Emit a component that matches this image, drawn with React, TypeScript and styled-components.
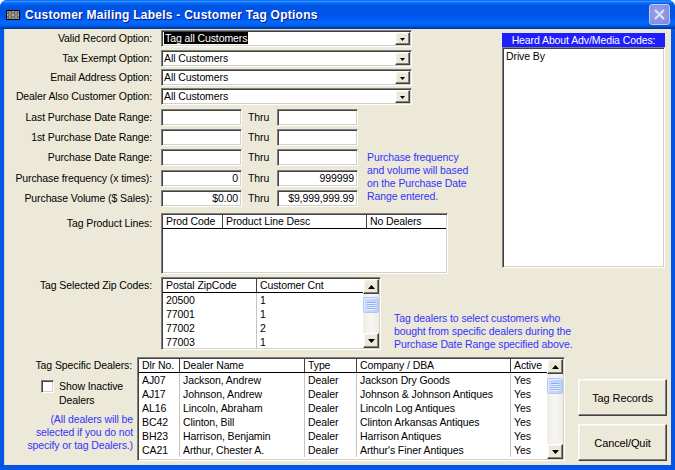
import React from "react";
import styled, { createGlobalStyle } from "styled-components";

const GlobalStyle = createGlobalStyle`
  html, body { margin: 0; padding: 0; background: #fff; }
  body {
    font-family: "Liberation Sans", Arial, sans-serif;
    font-size: 10.5px;
    letter-spacing: -0.1px;
    color: #000;
  }
  * { box-sizing: border-box; }
`;

const sunken = `
  border: 1px solid;
  border-color: #808080 #fff #fff #808080;
  box-shadow: inset 1px 1px 0 #404040, inset -1px -1px 0 #d4d0c8;
`;

const raised = `
  border: 1px solid;
  border-color: #fff #404040 #404040 #fff;
  box-shadow: inset -1px -1px 0 #808080, inset 1px 1px 0 #f6f4ec;
  background: #ece9d8;
`;

const Window = styled.div`
  width: 675px;
  height: 470px;
  display: flex;
  flex-direction: column;
  background: #0555e6;
  border-radius: 7px 7px 0 0;
  overflow: hidden;
`;

const TitleBar = styled.div`
  height: 29px;
  flex: none;
  display: flex;
  align-items: center;
  padding: 0 5px 0 6px;
  background: linear-gradient(
    to bottom,
    #0058ee 0%,
    #3593ff 4%,
    #288eff 6%,
    #127dff 8%,
    #036ffc 10%,
    #0262ee 14%,
    #0057e5 20%,
    #0054e3 24%,
    #0055eb 56%,
    #005bf5 66%,
    #026afe 76%,
    #0062ef 86%,
    #0052d6 92%,
    #0040ab 96%,
    #003092 100%
  );
`;

const TitleText = styled.div`
  flex: 1;
  margin-left: 5px;
  color: #fff;
  font-family: "Liberation Sans", Arial, sans-serif;
  font-weight: bold;
  font-size: 12px;
  letter-spacing: 0.25px;
  text-shadow: 1px 1px 0 #0a1a8a;
`;

const CloseButton = styled.div`
  width: 21px;
  height: 21px;
  border-radius: 3px;
  border: 1px solid #c3c9f2;
  background: radial-gradient(circle at 40% 40%, #97a0e8 0%, #8690e0 70%, #7a85da 100%);
  display: flex;
  align-items: center;
  justify-content: center;
`;

const Client = styled.div`
  flex: 1;
  margin: 0 4px 5px 4px;
  background: #ece9d8;
  display: flex;
  flex-direction: column;
  box-shadow: inset 1px 0 0 #d8d4c4;
`;

const TopSection = styled.div`
  display: flex;
  padding-top: 1px;
`;

const FormGrid = styled.div`
  width: 498px;
  display: grid;
  grid-template-columns: 157px 81px 35px 81px 1fr;
  grid-template-rows: 20px 19px 19px 21px 20px 20px 21px 20px 23px 61px;
`;

const Label = styled.div<{ $pad?: number }>`
  grid-column: 1;
  text-align: right;
  padding-right: 9px;
  padding-top: ${(p) => p.$pad ?? 0}px;
  line-height: ${(p) => (p.$pad ? 14 : 17)}px;
  white-space: nowrap;
`;

const Combo = styled.div`
  grid-column: 2 / span 4;
  justify-self: start;
  width: 251px;
  height: 17px;
  ${sunken}
  background: #fff;
  padding: 1px;
  display: flex;
`;

const ComboText = styled.div`
  flex: 1;
  line-height: 13px;
  padding-left: 1px;
  white-space: nowrap;
  overflow: hidden;
`;

const Selected = styled.span`
  background: #000;
  color: #fff;
  padding: 0 1px;
`;

const DropButton = styled.div`
  width: 15px;
  height: 13px;
  ${raised}
  display: flex;
  align-items: center;
  justify-content: center;
  padding-top: 2px;
`;

const TextBox = styled.div<{ $right?: boolean }>`
  width: 81px;
  height: 17px;
  ${sunken}
  background: #fff;
  line-height: 15px;
  padding: 0 3px;
  text-align: ${(p) => (p.$right ? "right" : "left")};
  white-space: nowrap;
  overflow: hidden;
`;

const Thru = styled.div`
  padding-left: 6px;
  line-height: 17px;
`;

const BlueNote = styled.div<{ $align?: string }>`
  color: #3333ff;
  line-height: 13px;
  white-space: nowrap;
  text-align: ${(p) => p.$align ?? "left"};
`;

const PurchaseNote = styled(BlueNote)`
  grid-column: 5;
  grid-row: 7 / span 3;
  padding: 2px 0 0 9px;
`;

const ListSlot = styled.div`
  grid-column: 2 / span 4;
`;

const ListBox = styled.div<{ $w: number; $h: number }>`
  width: ${(p) => p.$w}px;
  height: ${(p) => p.$h}px;
  ${sunken}
  background: #fff;
  padding: 1px;
  display: flex;
  overflow: hidden;
`;

const Table = styled.div`
  flex: 1;
  display: flex;
  flex-direction: column;
  min-width: 0;
`;

const Row = styled.div<{ $cols: string }>`
  display: grid;
  grid-template-columns: ${(p) => p.$cols};
`;

const HeadCell = styled.div`
  height: 14px;
  line-height: 13px;
  padding-left: 3px;
  border-bottom: 1px solid #000;
  border-right: 1px solid #404040;
  white-space: nowrap;
  overflow: hidden;
  &:last-child {
    border-right: none;
  }
`;

const Cell = styled.div`
  height: 14px;
  line-height: 14px;
  padding-left: 3px;
  border-right: 1px solid #c4c4c4;
  white-space: nowrap;
  overflow: hidden;
  &:last-child {
    border-right: none;
  }
`;

const ScrollTrack = styled.div`
  width: 16px;
  display: flex;
  flex-direction: column;
  background: linear-gradient(to right, #eeede6, #f7f6f2 50%, #efeee8);
`;

const ScrollArrow = styled.div`
  height: 15px;
  ${raised}
  display: flex;
  align-items: center;
  justify-content: center;
`;

const Thumb = styled.div<{ $top: number }>`
  margin-top: ${(p) => p.$top}px;
  height: 16px;
  border: 1px solid #b2c5f4;
  border-radius: 2px;
  background: linear-gradient(to right, #c9d8fc, #bccffb);
  box-shadow: inset 1px 1px 0 #e4ecfe;
  display: flex;
  flex-direction: column;
  align-items: center;
  justify-content: center;
  gap: 1px;
`;

const Grip = styled.div`
  width: 8px;
  height: 1px;
  background: #8eaef3;
  box-shadow: 0 1px 0 #eef3fe;
`;

const Spacer = styled.div`
  flex: 1;
`;

const MediaPanel = styled.div`
  width: 163px;
  height: 235px;
  margin-top: 3px;
  display: flex;
  flex-direction: column;
`;

const MediaHeader = styled.div`
  height: 14px;
  background: #1e1eff;
  color: #fff;
  text-align: center;
  line-height: 14px;
  white-space: nowrap;
`;

const MediaList = styled.div`
  flex: 1;
  ${sunken}
  background: #fff;
  padding: 1px 3px;
  line-height: 14px;
`;

const ZipSection = styled.div`
  display: flex;
  align-items: flex-start;
  margin-top: 3px;
`;

const SideLabel = styled.div<{ $w: number; $pr: number; $pt: number }>`
  width: ${(p) => p.$w}px;
  padding-right: ${(p) => p.$pr}px;
  padding-top: ${(p) => p.$pt}px;
  text-align: right;
  line-height: 14px;
  white-space: nowrap;
`;

const ZipNote = styled(BlueNote)`
  margin: 35px 0 0 13px;
`;

const DealerSection = styled.div`
  display: flex;
  align-items: flex-start;
  margin-top: 6px;
`;

const DealerSide = styled.div`
  width: 133px;
  display: flex;
  flex-direction: column;
`;

const CheckRow = styled.div`
  display: flex;
  align-items: flex-start;
  margin-top: 7px;
  padding-left: 37px;
`;

const CheckBox = styled.div`
  width: 13px;
  height: 13px;
  margin-top: 1px;
  ${sunken}
  background: #fff;
`;

const CheckLabel = styled.div`
  margin-left: 5px;
  line-height: 14px;
`;

const DealerNote = styled(BlueNote)`
  margin-top: 6px;
  padding-right: 4px;
`;

const ButtonColumn = styled.div`
  display: flex;
  flex-direction: column;
  gap: 8px;
  margin: 22px 0 0 13px;
`;

const CmdButton = styled.button`
  width: 89px;
  height: 37px;
  ${raised}
  font-family: inherit;
  font-size: 11px;
  letter-spacing: -0.1px;
  color: #000;
  padding: 0;
`;

const Arrow = ({ up }: { up?: boolean }) => (
  <svg width="7" height="4" viewBox="0 0 7 4">
    <polygon points={up ? "3.5,0 7,4 0,4" : "0,0 7,0 3.5,4"} fill="#000" />
  </svg>
);

const ScrollBar = ({ thumbTop }: { thumbTop: number }) => (
  <ScrollTrack>
    <ScrollArrow>
      <Arrow up />
    </ScrollArrow>
    <Thumb $top={thumbTop}>
      <Grip />
      <Grip />
      <Grip />
      <Grip />
    </Thumb>
    <Spacer />
    <ScrollArrow>
      <Arrow />
    </ScrollArrow>
  </ScrollTrack>
);

const ComboBox = ({ children }: { children: React.ReactNode }) => (
  <Combo>
    <ComboText>{children}</ComboText>
    <DropButton>
      <svg width="5" height="3" viewBox="0 0 5 3">
        <polygon points="0,0 5,0 2.5,3" fill="#000" />
      </svg>
    </DropButton>
  </Combo>
);

const FormIcon = () => (
  <svg width="14" height="10" viewBox="0 0 14 10">
    <rect x="0.5" y="0.5" width="13" height="9" fill="#d4d0c8" stroke="#000" />
    <rect x="2" y="2" width="4" height="2" fill="#fff" stroke="#000" strokeWidth="0.8" />
    <rect x="8" y="2" width="4" height="2" fill="#fff" stroke="#000" strokeWidth="0.8" />
    <rect x="2" y="6" width="4" height="2" fill="#fff" stroke="#000" strokeWidth="0.8" />
    <rect x="8" y="6" width="4" height="2" fill="#fff" stroke="#000" strokeWidth="0.8" />
  </svg>
);

const dateRows = [
  { label: "Last Purchase Date Range:", from: "", to: "" },
  { label: "1st Purchase Date Range:", from: "", to: "" },
  { label: "Purchase Date Range:", from: "", to: "" },
  { label: "Purchase frequency (x times):", from: "0", to: "999999" },
  { label: "Purchase Volume ($ Sales):", from: "$0.00", to: "$9,999,999.99" },
];

const zips = [
  ["20500", "1"],
  ["77001", "1"],
  ["77002", "2"],
  ["77003", "1"],
];

const dealers = [
  ["AJ07", "Jackson, Andrew", "Dealer", "Jackson Dry Goods", "Yes"],
  ["AJ17", "Johnson, Andrew", "Dealer", "Johnson & Johnson Antiques", "Yes"],
  ["AL16", "Lincoln, Abraham", "Dealer", "Lincoln Log Antiques", "Yes"],
  ["BC42", "Clinton, Bill", "Dealer", "Clinton Arkansas Antiques", "Yes"],
  ["BH23", "Harrison, Benjamin", "Dealer", "Harrison Antiques", "Yes"],
  ["CA21", "Arthur, Chester A.", "Dealer", "Arthur's Finer Antiques", "Yes"],
];

const productCols = "60px 144px 1fr";
const zipCols = "94px 1fr";
const dealerCols = "41px 125px 52px 154px 1fr";

export default function App() {
  return (
    <>
      <GlobalStyle />
      <Window>
        <TitleBar>
          <FormIcon />
          <TitleText>Customer Mailing Labels - Customer Tag Options</TitleText>
          <CloseButton>
            <svg width="11" height="11" viewBox="0 0 11 11">
              <path d="M1 1 L10 10 M10 1 L1 10" stroke="#dfe4fb" strokeWidth="2" />
            </svg>
          </CloseButton>
        </TitleBar>
        <Client>
          <TopSection>
            <FormGrid>
              <Label>Valid Record Option:</Label>
              <ComboBox>
                <Selected>Tag all Customers</Selected>
              </ComboBox>
              <Label>Tax Exempt Option:</Label>
              <ComboBox>All Customers</ComboBox>
              <Label>Email Address Option:</Label>
              <ComboBox>All Customers</ComboBox>
              <Label>Dealer Also Customer Option:</Label>
              <ComboBox>All Customers</ComboBox>

              {dateRows.map((r, i) => (
                <React.Fragment key={r.label}>
                  <Label>{r.label}</Label>
                  <TextBox $right>{r.from}</TextBox>
                  <Thru>Thru</Thru>
                  <TextBox $right>{r.to}</TextBox>
                  {i === 2 && (
                    <PurchaseNote>
                      Purchase frequency
                      <br />
                      and volume will based
                      <br />
                      on the Purchase Date
                      <br />
                      Range entered.
                    </PurchaseNote>
                  )}
                </React.Fragment>
              ))}

              <Label $pad={3}>Tag Product Lines:</Label>
              <ListSlot>
                <ListBox $w={287} $h={61}>
                  <Table>
                    <Row $cols={productCols}>
                      <HeadCell>Prod Code</HeadCell>
                      <HeadCell>Product Line Desc</HeadCell>
                      <HeadCell>No Dealers</HeadCell>
                    </Row>
                  </Table>
                </ListBox>
              </ListSlot>
            </FormGrid>

            <MediaPanel>
              <MediaHeader>Heard About Adv/Media Codes:</MediaHeader>
              <MediaList>Drive By</MediaList>
            </MediaPanel>
          </TopSection>

          <ZipSection>
            <SideLabel $w={157} $pr={9} $pt={1}>
              Tag Selected Zip Codes:
            </SideLabel>
            <ListBox $w={220} $h={73}>
              <Table>
                <Row $cols={zipCols}>
                  <HeadCell>Postal ZipCode</HeadCell>
                  <HeadCell>Customer Cnt</HeadCell>
                </Row>
                {zips.map((z) => (
                  <Row $cols={zipCols} key={z[0]}>
                    <Cell>{z[0]}</Cell>
                    <Cell>{z[1]}</Cell>
                  </Row>
                ))}
              </Table>
              <ScrollBar thumbTop={3} />
            </ListBox>
            <ZipNote>
              Tag dealers to select customers who
              <br />
              bought from specific dealers during the
              <br />
              Purchase Date Range specified above.
            </ZipNote>
          </ZipSection>

          <DealerSection>
            <DealerSide>
              <SideLabel $w={133} $pr={5} $pt={1}>
                Tag Specific Dealers:
              </SideLabel>
              <CheckRow>
                <CheckBox />
                <CheckLabel>
                  Show Inactive
                  <br />
                  Dealers
                </CheckLabel>
              </CheckRow>
              <DealerNote $align="right">
                (All dealers will be
                <br />
                selected if you do not
                <br />
                specify or tag Dealers.)
              </DealerNote>
            </DealerSide>
            <ListBox $w={428} $h={104}>
              <Table>
                <Row $cols={dealerCols}>
                  <HeadCell>Dlr No.</HeadCell>
                  <HeadCell>Dealer Name</HeadCell>
                  <HeadCell>Type</HeadCell>
                  <HeadCell>Company / DBA</HeadCell>
                  <HeadCell>Active</HeadCell>
                </Row>
                {dealers.map((d) => (
                  <Row $cols={dealerCols} key={d[0]}>
                    {d.map((v, i) => (
                      <Cell key={i}>{v}</Cell>
                    ))}
                  </Row>
                ))}
              </Table>
              <ScrollBar thumbTop={4} />
            </ListBox>
            <ButtonColumn>
              <CmdButton>Tag Records</CmdButton>
              <CmdButton>Cancel/Quit</CmdButton>
            </ButtonColumn>
          </DealerSection>
        </Client>
      </Window>
    </>
  );
}
